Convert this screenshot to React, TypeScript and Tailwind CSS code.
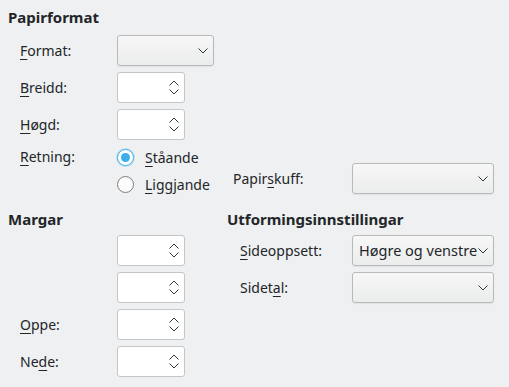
import React from "react";

function U({ children }: { children: React.ReactNode }) {
  return <span className="underline underline-offset-[3px] decoration-[1px]">{children}</span>;
}

function Chevron({ up = false }: { up?: boolean }) {
  return (
    <svg width="10" height="6" viewBox="0 0 10 6" className="block">
      <path
        d={up ? "M0.5 5.5 L5 1 L9.5 5.5" : "M0.5 0.5 L5 5 L9.5 0.5"}
        fill="none"
        stroke="#31363b"
        strokeWidth="1"
      />
    </svg>
  );
}

function Spin() {
  return (
    <div className="w-[68px] h-[31px] bg-white border border-[#c3c5c7] rounded-[3px] flex items-center justify-end pr-[5px]">
      <div className="flex flex-col gap-[3px]">
        <Chevron up />
        <Chevron />
      </div>
    </div>
  );
}

function Combo({ width, text }: { width: string; text?: string }) {
  return (
    <div
      className={`${width} h-[31px] border border-[#b7b9bb] rounded-[3px] bg-gradient-to-b from-[#f7f7f7] to-[#ebecec] flex items-center pl-[6px] pr-[5px] shadow-[0_1px_1px_rgba(0,0,0,0.06)]`}
    >
      <div className="flex-1 overflow-hidden whitespace-nowrap text-[14.5px]">{text}</div>
      <Chevron />
    </div>
  );
}

function Radio({ checked }: { checked?: boolean }) {
  return checked ? (
    <div className="w-[17px] h-[17px] rounded-full border-[1.5px] border-[#3daee9] bg-white flex items-center justify-center shadow-[0_0_0_1px_rgba(61,174,233,0.25)]">
      <div className="w-[9px] h-[9px] rounded-full bg-[#3daee9]" />
    </div>
  ) : (
    <div className="w-[17px] h-[17px] rounded-full border border-[#7a7c7e] bg-[#fcfcfc]" />
  );
}

export default function App() {
  return (
    <div
      className="w-[509px] h-[387px] bg-[#eff0f1] text-[#232629] text-[14px] overflow-hidden pl-[8px] pt-[7px]"
      style={{ fontFamily: '"Noto Sans", "DejaVu Sans", sans-serif' }}
    >
      <h3 className="h-[20px] leading-[20px] text-[15px] font-bold">Papirformat</h3>

      <div className="mt-[8px] flex flex-col gap-[6px]">
        <div className="flex items-center">
          <label className="w-[109px] pl-[12px]">
            <U>F</U>ormat:
          </label>
          <Combo width="w-[97px]" />
        </div>
        <div className="flex items-center">
          <label className="w-[109px] pl-[12px]">
            <U>B</U>reidd:
          </label>
          <Spin />
        </div>
        <div className="flex items-center">
          <label className="w-[109px] pl-[12px]">
            <U>H</U>øgd:
          </label>
          <Spin />
        </div>
      </div>

      <div className="mt-[6px] flex items-start">
        <label className="w-[109px] pl-[12px] h-[22px] leading-[22px]">
          <U>R</U>etning:
        </label>
        <div className="w-[116px] flex flex-col gap-[5px]">
          <div className="flex items-center gap-[11px] h-[22px]">
            <Radio checked />
            <span>
              <U>S</U>tåande
            </span>
          </div>
          <div className="flex items-center gap-[11px] h-[22px]">
            <Radio />
            <span>
              <U>L</U>iggjande
            </span>
          </div>
        </div>
        <div className="mt-[17px] flex items-center">
          <label className="w-[119px]">
            Papir<U>s</U>kuff:
          </label>
          <Combo width="w-[142px]" />
        </div>
      </div>

      <div className="mt-[14px] flex">
        <div className="w-[219px]">
          <h3 className="h-[20px] leading-[20px] text-[15px] font-bold">Margar</h3>
          <div className="mt-[6px] flex flex-col gap-[6px]">
            <div className="flex items-center">
              <div className="w-[109px]" />
              <Spin />
            </div>
            <div className="flex items-center">
              <div className="w-[109px]" />
              <Spin />
            </div>
            <div className="flex items-center">
              <label className="w-[109px] pl-[12px]">
                <U>O</U>ppe:
              </label>
              <Spin />
            </div>
            <div className="flex items-center">
              <label className="w-[109px] pl-[12px]">
                Ne<U>d</U>e:
              </label>
              <Spin />
            </div>
          </div>
        </div>
        <div>
          <h3 className="h-[20px] leading-[20px] text-[15px] font-bold">Utformingsinnstillingar</h3>
          <div className="mt-[6px] flex flex-col gap-[6px]">
            <div className="flex items-center">
              <label className="w-[125px] pl-[13px]">
                <U>S</U>ideoppsett:
              </label>
              <Combo width="w-[142px]" text="Høgre og venstre" />
            </div>
            <div className="flex items-center">
              <label className="w-[125px] pl-[13px]">
                Sidet<U>a</U>l:
              </label>
              <Combo width="w-[142px]" />
            </div>
          </div>
        </div>
      </div>
    </div>
  );
}
